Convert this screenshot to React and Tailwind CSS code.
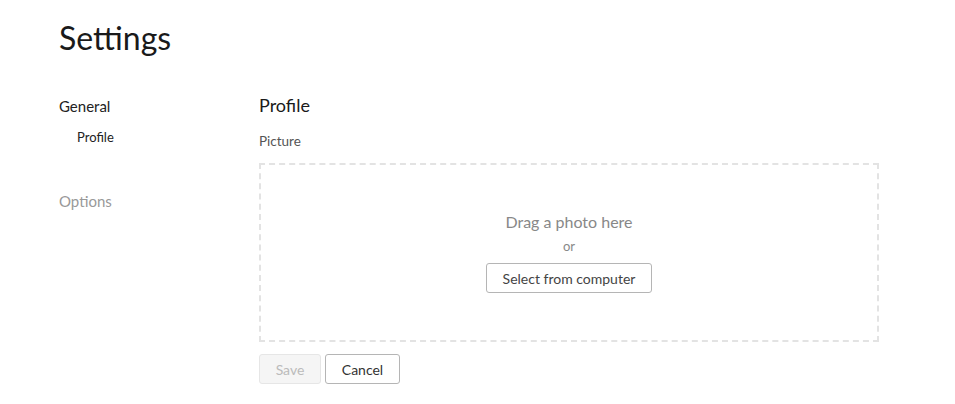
import React from "react";

function Sidebar() {
  return (
    <nav className="w-[200px] shrink-0 pt-[2px]">
      <div className="text-[15px] leading-[20px] text-[#222]">General</div>
      <div className="mt-[12px] pl-[18px] text-[13px] leading-[18px] text-[#222]">Profile</div>
      <div className="mt-[45px] text-[15px] leading-[20px] text-[#999]">Options</div>
    </nav>
  );
}

function Dropzone() {
  return (
    <div className="w-[620px] h-[179px] border-2 border-dashed border-[#e3e3e3] flex flex-col items-center justify-center">
      <div className="text-[16px] leading-[20px] text-[#888]">Drag a photo here</div>
      <div className="mt-[6px] text-[13px] leading-[16px] text-[#888]">or</div>
      <button className="mt-[9px] h-[30px] px-[16px] rounded-[3px] border border-[#b5b5b5] bg-white text-[14px] text-[#444]">
        Select from computer
      </button>
    </div>
  );
}

export default function App() {
  return (
    <div className="min-h-[404px] bg-white px-[59px] pt-[18px]" style={{ fontFamily: "Lato, 'Open Sans', sans-serif" }}>
      <h1 className="text-[32px] leading-[40px] text-[#1a1a1a]">Settings</h1>
      <div className="mt-[36px] flex">
        <Sidebar />
        <section className="flex-1">
          <h2 className="text-[18px] leading-[22px] text-[#1a1a1a]">Profile</h2>
          <div className="mt-[17px] text-[13.5px] leading-[16px] text-[#555]">Picture</div>
          <div className="mt-[14px]">
            <Dropzone />
          </div>
          <div className="mt-[12px] flex gap-[4px]">
            <button disabled className="h-[30px] w-[62px] rounded-[3px] border border-[#e6e6e6] bg-[#f5f5f5] text-[14px] text-[#bbb]">
              Save
            </button>
            <button className="h-[30px] w-[75px] rounded-[3px] border border-[#b5b5b5] bg-white text-[14px] text-[#333]">
              Cancel
            </button>
          </div>
        </section>
      </div>
    </div>
  );
}
